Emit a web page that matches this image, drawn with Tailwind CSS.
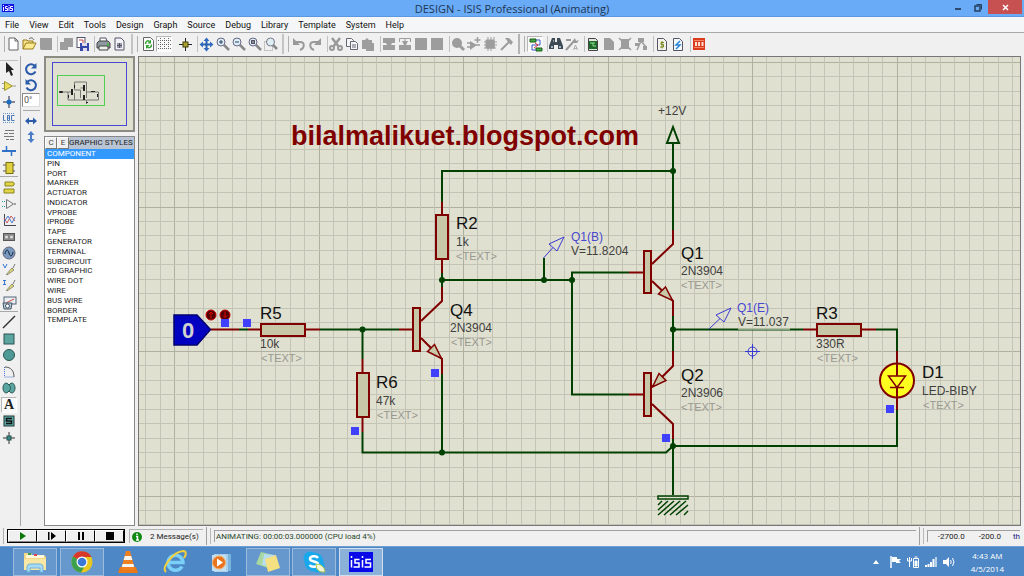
<!DOCTYPE html>
<html lang="en">
<head>
  <meta charset="UTF-8" />
  <title>DESIGN - ISIS Professional (Animating)</title>
  <script src="https://cdn.jsdelivr.net/npm/@tailwindcss/browser@4"></script>
</head>
<body class="h-screen flex flex-col overflow-hidden bg-[#f0f0f0] font-['Roboto',sans-serif] text-[8px] leading-[10px] text-[#222]">

  <!-- Title bar -->
  <header class="h-[17px] shrink-0 flex items-start bg-[#6aabf7] border-b border-[#5b98e0]">
    <div class="flex-1 pl-[2px] pt-1">
      <svg class="w-3 h-2" viewBox="0 0 24 16"><rect width="24" height="16" fill="#1010e0"/><path d="M3 2v2M3 6v8M11 5H7v4h4v4H6M14 2v2M14 6v8M22 5h-5v4h4v4h-5" fill="none" stroke="#fff" stroke-width="2"/></svg>
    </div>
    <h1 class="font-['Open_Sans',sans-serif] text-[11px] leading-[17px] text-[#1d3550]">DESIGN - ISIS Professional (Animating)</h1>
    <div class="flex-1 flex justify-end pr-[2px]">
      <button aria-label="Minimize" class="w-5 h-[14px] flex items-end justify-center pb-1"><span class="w-[6px] h-[2px] bg-[#2c4a6b]"></span></button>
      <button aria-label="Restore" class="w-5 h-[14px] flex items-center justify-center"><svg class="w-[9px] h-[9px]" viewBox="0 0 9 9" fill="none" stroke="#243f5e"><path d="M2.500 1.500h5v5"/><rect x="1" y="3" width="5" height="5" stroke-width="1.500"/></svg></button>
      <button aria-label="Close" class="w-[34px] h-[14px] flex items-center justify-center bg-[#c75050]"><svg class="w-[7px] h-[7px]" viewBox="0 0 7 7"><path d="M1 1l5 5M6 1l-5 5" stroke="#fff" stroke-width="1.500"/></svg></button>
    </div>
  </header>

  <!-- Menu bar -->
  <nav class="h-4 shrink-0 flex items-center gap-[10px] pl-[5px] bg-[#f5f6f7] border-b border-[#a8a8a8] text-[9px] text-[#111]">
    <a href="#">File</a>
    <a href="#">View</a>
    <a href="#">Edit</a>
    <a href="#">Tools</a>
    <a href="#">Design</a>
    <a href="#">Graph</a>
    <a href="#">Source</a>
    <a href="#">Debug</a>
    <a href="#">Library</a>
    <a href="#">Template</a>
    <a href="#">System</a>
    <a href="#">Help</a>
  </nav>

  <!-- Toolbar -->
  <div class="h-[23px] shrink-0 flex items-center pl-[2px] pb-[2px] [&>button]:w-4 [&>button]:h-4 [&>button]:shrink-0 [&_svg]:w-4 [&_svg]:h-4">
    <span class="w-[3px] h-4 shrink-0 border-r border-[#b0b0b0]"></span>
    <button aria-label="New"><svg viewBox="0 0 16 16"><path d="M4 2h6l3 3v9H4z" fill="#fff" stroke="#666"/><path d="M10 2v3h3" fill="none" stroke="#666"/></svg></button>
    <button aria-label="Open"><svg viewBox="0 0 16 16"><path d="M2 13V4h4l1 1h5v3" fill="#f5e28a" stroke="#9a7b1c"/><path d="M2 13l3-6h10l-3 6z" fill="#fbeb90" stroke="#9a7b1c"/><path d="M8 3c2-2 4-1 5 1" fill="none" stroke="#555"/></svg></button>
    <button aria-label="Save"><svg viewBox="0 0 16 16"><path d="M3 2h12v12H4l-1-1z" fill="#9d9d9d"/></svg></button>
    <span class="w-[5px] h-4 shrink-0 border-r border-[#c0c0c0]"></span>
    <button aria-label="Import section"><svg viewBox="0 0 16 16"><path d="M2 6h4V2h9v9h-5v3H2z" fill="#9d9d9d"/></svg></button>
    <button aria-label="Export section"><svg viewBox="0 0 16 16"><rect x="3" y="1.500" width="8" height="10" fill="#fff" stroke="#556"/><path d="M5 4h4v5" stroke="#c44" fill="none"/><path d="M6 7h9v8H6z" fill="#3848a8"/><path d="M8 7h5v3H8zM9 12h4v3H9z" fill="#dde"/></svg></button>
    <span class="w-[5px] h-4 shrink-0 border-r border-[#c0c0c0]"></span>
    <button aria-label="Print"><svg viewBox="0 0 16 16"><path d="M5 6V2h6l1 4" fill="#fff" stroke="#556"/><path d="M2 7l2-2h9l2 2v5H2z" fill="#8f9aa0" stroke="#444"/><path d="M4 10h9v4H4z" fill="#e8f0e8" stroke="#444"/><circle cx="13" cy="8.500" r="1" fill="#2c2"/></svg></button>
    <button aria-label="Mark output area"><svg viewBox="0 0 16 16"><path d="M4 2h6l3 3v9H4z" fill="#f2f2f8" stroke="#556"/><path d="M6 7h5v5H6z" fill="#99a"/><path d="M6 9.500h5M8.500 7v5" stroke="#556"/></svg></button>
    <span class="w-[5px] h-5 ml-px shrink-0 border-r-2 border-[#c4c4c4]"></span>
    <span class="w-[5px] h-4 mr-[2px] shrink-0 border-r border-[#b0b0b0]"></span>
    <button aria-label="Redraw"><svg viewBox="0 0 16 16"><path d="M3.500 1.500h7l3 3v10h-10z" fill="#fff" stroke="#666"/><path d="M5.500 8c0-3 2.500-4 4-2.500M11.500 8.500c0 3-2.500 4-4 2.500" fill="none" stroke="#35a035" stroke-width="1.500"/><path d="M11 3.500V7.500H7.500zM6 13V9h3.500z" fill="#35a035"/></svg></button>
    <button aria-label="Toggle grid" class="bg-[#fafafa] border border-[#b8b8b8] border-r-white border-b-white"><svg viewBox="1 1 16 16"><path d="M4.500 2v12M8.500 2v12M12.500 2v12M2 4.500h13M2 8.500h13M2 12.500h13" stroke="#666" stroke-dasharray="1 1"/></svg></button>
    <span class="w-[5px] h-4 shrink-0"></span>
    <button aria-label="Toggle origin"><svg viewBox="0 0 16 16"><path d="M8.500 2v13M2 8.500h13" stroke="#222"/><rect x="6" y="6" width="5" height="5" fill="#a8a030" stroke="#444008"/></svg></button>
    <span class="w-[5px] h-4 shrink-0 border-r border-[#c0c0c0]"></span>
    <button aria-label="Pan"><svg viewBox="0 0 16 16"><path d="M8.500 3v11M3 8.500h11" stroke="#2660b0" stroke-width="2"/><path d="M8.500 1.500l3 3.500h-6zM8.500 15.500l3-3.500h-6zM1.500 8.500l3.500-3v6zM15.500 8.500l-3.500-3v6z" fill="#2f6cc0"/></svg></button>
    <button aria-label="Zoom in"><svg viewBox="0 0 16 16"><path d="M10 9l5 5" stroke="#888" stroke-width="2.500"/><circle cx="7" cy="6" r="4" fill="#dfeef2" stroke="#668"/><path d="M5 6h4M7 4v4" stroke="#246"/></svg></button>
    <button aria-label="Zoom out"><svg viewBox="0 0 16 16"><path d="M10 9l5 5" stroke="#888" stroke-width="2.500"/><circle cx="7" cy="6" r="4" fill="#dfeef2" stroke="#668"/><path d="M5 6h4" stroke="#246"/></svg></button>
    <button aria-label="Zoom all"><svg viewBox="0 0 16 16"><path d="M10 9l5 5" stroke="#888" stroke-width="2.500"/><circle cx="7" cy="6" r="4" fill="#dfeef2" stroke="#668"/><rect x="5.500" y="4.500" width="3" height="3" fill="#889" stroke="#556"/></svg></button>
    <button aria-label="Zoom area"><svg viewBox="0 0 16 16"><rect x="2.500" y="5.500" width="8" height="9" fill="none" stroke="#999" stroke-dasharray="1 1"/><path d="M11 9l4 4" stroke="#888" stroke-width="2.500"/><circle cx="8.500" cy="6" r="4" fill="#dfeef2" stroke="#778"/></svg></button>
    <span class="w-[5px] h-5 ml-px shrink-0 border-r-2 border-[#c4c4c4]"></span>
    <span class="w-[5px] h-4 mr-[2px] shrink-0 border-r border-[#b0b0b0]"></span>
    <button aria-label="Undo"><svg viewBox="0 0 16 16"><path d="M4 6h5c5 0 5 6 0 8" fill="none" stroke="#999" stroke-width="2"/><path d="M2 2v7h7z" fill="#999"/></svg></button>
    <button aria-label="Redo"><svg viewBox="0 0 16 16"><path d="M12 6H7c-5 0-5 6 0 8" fill="none" stroke="#999" stroke-width="2"/><path d="M14 2v7H7z" fill="#999"/></svg></button>
    <span class="w-[5px] h-4 shrink-0 border-r border-[#c0c0c0]"></span>
    <button aria-label="Cut"><svg viewBox="0 0 16 16"><path d="M4 2l7 9M12 2l-7 9" stroke="#999" stroke-width="2.500"/><circle cx="4" cy="12" r="2" fill="none" stroke="#999" stroke-width="2"/><circle cx="12" cy="12" r="2" fill="none" stroke="#999" stroke-width="2"/></svg></button>
    <button aria-label="Copy"><svg viewBox="0 0 16 16"><path d="M2.500 2.500h5l2 2v6h-7z" fill="#f4f6f8" stroke="#667"/><path d="M6.500 5.500h5l2 2v6h-7z" fill="#f4f6f8" stroke="#667"/><path d="M8 9h4M8 11h4" stroke="#667"/></svg></button>
    <button aria-label="Paste"><svg viewBox="0 0 16 16"><path d="M2 4h3l2-2 2 2h3v3h2v8H6v-2H2z" fill="#9d9d9d"/></svg></button>
    <span class="w-[5px] h-4 shrink-0 border-r border-[#c0c0c0]"></span>
    <button aria-label="Block copy"><svg viewBox="0 0 16 16"><path d="M2 2h12v5h-3l-1 2h4v5H2V9h4L5 7H2z" fill="#9d9d9d"/></svg></button>
    <button aria-label="Block move"><svg viewBox="0 0 16 16"><path d="M2.500 6V2.500h11V6M8 3v6" fill="none" stroke="#9d9d9d"/><path d="M5 5h6L9 9h5v5H2V9h5z" fill="#9d9d9d"/></svg></button>
    <button aria-label="Block rotate"><svg viewBox="0 0 16 16"><path d="M2 2h12v12H2z" fill="#9d9d9d"/></svg></button>
    <button aria-label="Block delete"><svg viewBox="0 0 16 16"><path d="M2 2h12v12H2z" fill="#9d9d9d"/></svg></button>
    <span class="w-[5px] h-4 shrink-0 border-r border-[#c0c0c0]"></span>
    <button aria-label="Pick parts"><svg viewBox="0 0 16 16"><circle cx="7" cy="7" r="5" fill="#9d9d9d"/><path d="M9 9l5 5" stroke="#9d9d9d" stroke-width="3"/></svg></button>
    <button aria-label="Make device"><svg viewBox="0 0 16 16"><path d="M4 5l7 4-7 5z" fill="#9d9d9d"/><path d="M1 7h4M1 11h4M10 9h4M11.500 1v6M8.500 4h6" stroke="#9d9d9d" stroke-width="1.500"/></svg></button>
    <button aria-label="Packaging tool"><svg viewBox="0 0 16 16"><path d="M4 4h8v8H4z" fill="#9d9d9d" stroke="#9d9d9d"/><path d="M6 1v14M9 1v14M12 1v12M2 6h13M2 9h13M2 12h12" stroke="#9d9d9d"/></svg></button>
    <button aria-label="Decompose"><svg viewBox="0 0 16 16"><path d="M3 14l8-8" stroke="#9d9d9d" stroke-width="2"/><path d="M7 2h4l4 4-2 3-3-3z" fill="#9d9d9d"/></svg></button>
    <span class="w-[5px] h-5 ml-px shrink-0 border-r-2 border-[#b4b4b4]"></span>
    <span class="w-[5px] h-4 mr-[2px] shrink-0 border-r border-[#b0b0b0]"></span>
    <button aria-label="Wire autorouter" class="bg-[#fafafa] border border-[#b8b8b8] border-r-white border-b-white"><svg viewBox="1 1 16 16"><path d="M3 3h6v3H3zM9 12h6v3H9z" fill="#3fae3f" stroke="#185818"/><path d="M9 4h4v5H5v5h4" fill="none" stroke="#3858c8"/><path d="M8 7l3 2-4 3" fill="none" stroke="#d33"/></svg></button>
    <span class="w-[5px] h-4 shrink-0 border-r border-[#c0c0c0]"></span>
    <button aria-label="Search and tag"><svg viewBox="0 0 16 16"><path d="M4 2h3v4h2V2h3l3 8v3h-5V9H6v4H1v-3z" fill="#3d4a55"/><path d="M3 10h2v2H3zM11 10h2v2h-2zM5 4h1v3" fill="#a9b8c0"/></svg></button>
    <button aria-label="Property assignment"><svg viewBox="0 0 16 16"><path d="M2 14l9-10M2 4h5" stroke="#999" stroke-width="2"/><path d="M9 5l2-3 1 3 3-1-2 3-3 0z" fill="#999"/><path d="M9.500 14l2-5 2 5M10 12.500h3" fill="none" stroke="#aaa"/></svg></button>
    <span class="w-[5px] h-4 shrink-0 border-r border-[#c0c0c0]"></span>
    <button aria-label="Design explorer"><svg viewBox="0 0 16 16"><path d="M3.500 2.500h7l2 2v10h-9z" fill="#dfe8df" stroke="#444"/><rect x="4" y="5" width="8" height="8" fill="#1d6b2a"/><path d="M5 7h3v3h3M9 6v2" stroke="#8fe08f" fill="none"/></svg></button>
    <button aria-label="New sheet"><svg viewBox="0 0 16 16"><path d="M3 2h6l4 4v8H3z" fill="#9d9d9d"/></svg></button>
    <button aria-label="Remove sheet"><svg viewBox="0 0 16 16"><path d="M4 3h8v10H4z" fill="#9d9d9d"/><path d="M2 2l12 12M14 2L2 14" stroke="#9d9d9d" stroke-width="1.500"/></svg></button>
    <button aria-label="Exit to parent"><svg viewBox="0 0 16 16"><path d="M5 2h6v4H5zM2 7h4v3H2zM10 10h4v4h-4z" fill="#9d9d9d"/><path d="M4 14l4-9 5 6" fill="none" stroke="#9d9d9d" stroke-width="1.500"/></svg></button>
    <span class="w-[5px] h-4 shrink-0 border-r border-[#c0c0c0]"></span>
    <button aria-label="Bill of materials"><svg viewBox="0 0 16 16"><path d="M3.500 2.500h6l3 3v9h-9z" fill="#f3f3ea" stroke="#556"/><path d="M10 6.500H7v2h2.500v2.500H6M8 5v7.500" fill="none" stroke="#7a8a20"/></svg></button>
    <button aria-label="Electrical rules check"><svg viewBox="0 0 16 16"><path d="M3.500 2.500h6l3 3v9h-9z" fill="#f3f8fb" stroke="#556"/><path d="M10 5L6 9h4l-4 4" fill="none" stroke="#2a86d8" stroke-width="1.500"/></svg></button>
    <span class="w-[5px] h-4 shrink-0 border-r border-[#c0c0c0]"></span>
    <button aria-label="Netlist to ARES"><svg viewBox="0 0 16 16"><rect x="2" y="2" width="12" height="12" fill="#dc3a1c"/><path d="M3 4.500h10M3 11.500h10" stroke="#f08868"/><path d="M4 6h2v4H4zM7 6h2v4H7zM10.500 6h2v4h-2z" fill="#ffe0d0"/></svg></button>
  </div>

  <!-- Work area -->
  <div class="flex-1 min-h-0 flex">

    <!-- Mode selector -->
    <div class="w-[21px] shrink-0 border-r border-[#a8a8a8] pt-[4px] pr-[2px] [&_svg]:w-4 [&_svg]:h-4 [&_button]:h-4 [&_button]:shrink-0">
      <div class="h-[117px] flex flex-col items-center justify-around border-t border-b border-t-[#c0c0c0] border-b-[#a8a8a8]">
        <button aria-label="Selection"><svg viewBox="0 0 16 16"><path d="M5 1v11l3-2 2 5 2-1-2-5h3z" fill="#222"/></svg></button>
        <button aria-label="Component"><svg viewBox="0 0 16 16"><path d="M1 5.500h3M1 10.500h3M12 8h3" stroke="#999"/><path d="M3.500 3.500l8 4.500-8 4.500z" fill="#e8dc58" stroke="#a09830"/></svg></button>
        <button aria-label="Junction dot"><svg viewBox="0 0 16 16"><path d="M8 2v12M2 8h12" stroke="#224"/><circle cx="8" cy="8" r="2.500" fill="#1e6cc0"/></svg></button>
        <button aria-label="Wire label"><svg viewBox="0 0 16 16"><path d="M2 3.500h12M2 12.500h12" stroke="#6a94c8" stroke-dasharray="1 1"/><path d="M2.500 5v5.500h2M6.500 5.500v5h2v-5zM6.500 8h2M13.500 5.500h-3v5h3" fill="none" stroke="#4878b8"/></svg></button>
        <button aria-label="Text script"><svg viewBox="0 0 16 16"><path d="M4 3.500h9M3 6.500h4M8 6.500h5M3 9.500h10M5 12.500h3M9 12.500h4" stroke="#777"/></svg></button>
        <button aria-label="Bus"><svg viewBox="0 0 16 16"><path d="M1 8h14" stroke="#2f70c8" stroke-width="2"/><path d="M5.500 3v6M10.500 7v6" stroke="#2f70c8" stroke-width="1.500"/></svg></button>
        <button aria-label="Subcircuit"><svg viewBox="0 0 16 16"><path d="M2 5h12M2 11h12" stroke="#555"/><rect x="5" y="2.500" width="7" height="11" fill="#e0d040" stroke="#766c10"/></svg></button>
      </div>
      <div class="h-[135px] flex flex-col items-center justify-around border-b border-[#a8a8a8] pt-[2px]">
        <button aria-label="Terminals"><svg viewBox="0 0 16 16"><path d="M4 3h8l1.500 2L12 7H4zM3 10h10v4H3z" fill="#e0d648" stroke="#8a8220"/></svg></button>
        <button aria-label="Device pins"><svg viewBox="0 0 16 16"><path d="M1 5.500h4M1 10.500h4" stroke="#29a0a0" stroke-dasharray="1 1"/><path d="M5.500 3.500l7 4.500-7 4.500z" fill="none" stroke="#777"/><path d="M13 8h2" stroke="#555"/></svg></button>
        <button aria-label="Graph"><svg viewBox="0 0 16 16"><path d="M3.500 2v11.500H15" stroke="#445" fill="none"/><path d="M3 6l3 5 4-7 4 5" fill="none" stroke="#c55"/><path d="M3 10l4-6 4 7 3-6" fill="none" stroke="#4a78c8"/></svg></button>
        <button aria-label="Tape recorder"><svg viewBox="0 0 16 16"><rect x="2.500" y="4.500" width="11" height="7" fill="#888" stroke="#555"/><circle cx="5.500" cy="8" r="1.500" fill="#ddd"/><circle cx="10.500" cy="8" r="1.500" fill="#ddd"/></svg></button>
        <button aria-label="Generator"><svg viewBox="0 0 16 16"><circle cx="8" cy="8" r="6" fill="#7898c0" stroke="#667"/><path d="M4 9c1-5 3-5 4-1s3 4 4-1" fill="none" stroke="#123"/></svg></button>
        <button aria-label="Voltage probe"><svg viewBox="0 0 16 16"><path d="M2 2l2 4 2-4" fill="none" stroke="#3a78d0"/><path d="M5 13l6-7 2 2-7 5" fill="#e8e070" stroke="#887"/><path d="M12 6l2-4" stroke="#777"/></svg></button>
        <button aria-label="Current probe"><svg viewBox="0 0 16 16"><path d="M2 2.500h3M3.500 2.500v4M2 6.500h3" fill="none" stroke="#3a78d0"/><path d="M5 13l6-7 2 2-7 5" fill="#e8e070" stroke="#887"/><path d="M12 6l2-4" stroke="#777"/></svg></button>
        <button aria-label="Instruments"><svg viewBox="0 0 16 16"><rect x="3" y="2" width="12" height="7" fill="#e8eef2" stroke="#567"/><path d="M5 8l8-4" stroke="#c44"/><path d="M2 8h9l-1 6H3z" fill="#b8ccd8" stroke="#456"/><circle cx="6.500" cy="11" r="2" fill="#fff" stroke="#456"/></svg></button>
      </div>
      <div class="h-[134px] flex flex-col items-center justify-around pt-[2px]">
        <button aria-label="Line"><svg viewBox="0 0 16 16"><path d="M2 14L14 2" stroke="#333" stroke-width="1.500"/></svg></button>
        <button aria-label="Box"><svg viewBox="0 0 16 16"><rect x="3" y="3" width="10" height="10" fill="#5aa5a0" stroke="#2b5550"/></svg></button>
        <button aria-label="Circle"><svg viewBox="0 0 16 16"><circle cx="8" cy="8" r="5.500" fill="#4f9a96" stroke="#2b5550"/></svg></button>
        <button aria-label="Arc"><svg viewBox="0 0 16 16"><path d="M3.500 3v10h10" fill="none" stroke="#4870d0" stroke-dasharray="1 1"/><path d="M4 3c6 0 9 4 9 10" fill="none" stroke="#555"/></svg></button>
        <button aria-label="Closed path"><svg viewBox="0 0 16 16"><path d="M8 5C5 1 2 4 2 8s3 7 6 3c3 4 6 1 6-3s-3-7-6-3z" fill="#5aa5a0" stroke="#2b5550"/><path d="M8 5c2 2 2 4 0 6" fill="none" stroke="#2b5550"/></svg></button>
        <button aria-label="Text" class="w-4 bg-[#fafafa] border border-[#b8b8b8] border-r-white border-b-white font-['Liberation_Serif',serif] font-bold text-[14px] leading-[14px] text-[#222]">A</button>
        <button aria-label="Symbol"><svg viewBox="0 0 16 16"><rect x="3" y="3" width="10" height="10" fill="#5aa5a0" stroke="#1d3a38"/><path d="M11 5.500H5.500v2.500h5v2.500H5" fill="none" stroke="#111" stroke-width="1.500"/></svg></button>
        <button aria-label="Marker"><svg viewBox="0 0 16 16"><path d="M8 2v12M2 8h12" stroke="#333"/><rect x="6" y="6" width="4" height="4" fill="#3a8c88" stroke="#24504e"/></svg></button>
      </div>
    </div>

    <!-- Rotation -->
    <div class="w-[23px] shrink-0 flex flex-col items-center pt-[5px] pl-px pr-1 [&_svg]:w-4 [&_svg]:h-4">
      <button aria-label="Rotate clockwise"><svg viewBox="0 0 16 16"><path d="M11.500 4.500a5 5 0 1 0 1 6" fill="none" stroke="#2a5caa" stroke-width="2"/><path d="M13.500 2v5.500H8z" fill="#2a5caa"/></svg></button>
      <button aria-label="Rotate anticlockwise"><svg viewBox="0 0 16 16"><path d="M4.500 4.500a5 5 0 1 1-1 6" fill="none" stroke="#2a5caa" stroke-width="2"/><path d="M2.500 2v5.500H8z" fill="#2a5caa"/></svg></button>
      <input type="text" value="0°" aria-label="Rotation angle" class="w-[18px] h-[14px] bg-white border border-[#8a8a8a] border-r-[#ddd] border-b-[#ddd] pl-px text-[9px] text-[#555]" />
      <span class="w-[17px] h-px mt-[3px] mb-[2px] bg-[#a8a8a8]"></span>
      <button aria-label="Flip horizontal"><svg viewBox="0 0 16 16"><path d="M4 8h8" stroke="#2a5caa" stroke-width="2"/><path d="M2 8l4-3.500v7zM14 8l-4-3.500v7z" fill="#2a5caa"/></svg></button>
      <button aria-label="Flip vertical"><svg viewBox="0 0 16 16"><path d="M8 4v8" stroke="#4a7cc8" stroke-width="2"/><path d="M8 2L4.500 6h7zM8 14l-3.500-4h7z" fill="#4a7cc8"/></svg></button>
    </div>

    <!-- Overview and object selector -->
    <div class="w-[91px] shrink-0 flex flex-col gap-1">
      <div class="h-[76px] shrink-0 border-2 border-[#8c8c84] bg-[#e0e0d0] px-[6px] py-1">
        <div class="h-full border border-[#4848d0] px-[5px] py-[13px]">
          <svg class="w-[46px] h-[29px] outline outline-[#50d050]" viewBox="0 0 46 29" fill="none" stroke="#777">
            <path d="M16.500 14v-8h12v16M16.500 14h6v8M22.500 12h4M28.500 16h12v8h-12v4M10 16v8h18M2 16h11M16.500 17v7"/>
            <path d="M14 13v6M26 9v6M26 19v5" stroke="#222" stroke-width="2"/>
            <path d="M1.500 15.500h3v1h-3zM33 15.500h4M39.500 18v3M16.500 9v3M28 26.500h2M10.500 19v3" stroke="#222"/>
          </svg>
        </div>
      </div>
      <div class="flex-1 min-h-0 flex flex-col border border-[#888] bg-white">
        <div class="h-3 shrink-0 flex items-stretch bg-[#b8c4d4] whitespace-nowrap">
          <button class="w-3 shrink-0 bg-[#f0f0f0] border border-white border-r-[#777] border-b-[#777] text-[#444]">C</button>
          <button class="w-3 shrink-0 bg-[#f0f0f0] border border-white border-r-[#777] border-b-[#777] text-[#444]">E</button>
          <h2 class="leading-3">GRAPHIC STYLES</h2>
        </div>
        <ul role="listbox" aria-label="Graphic styles" class="h-[176px] flex flex-col [&>li]:flex-1 [&>li]:pl-[2px] [&>li]:min-h-0">
          <li role="option" aria-selected="true" class="bg-[#3399ff] text-white">COMPONENT</li>
          <li role="option">PIN</li>
          <li role="option">PORT</li>
          <li role="option">MARKER</li>
          <li role="option">ACTUATOR</li>
          <li role="option">INDICATOR</li>
          <li role="option">VPROBE</li>
          <li role="option">IPROBE</li>
          <li role="option">TAPE</li>
          <li role="option">GENERATOR</li>
          <li role="option">TERMINAL</li>
          <li role="option">SUBCIRCUIT</li>
          <li role="option">2D GRAPHIC</li>
          <li role="option">WIRE DOT</li>
          <li role="option">WIRE</li>
          <li role="option">BUS WIRE</li>
          <li role="option">BORDER</li>
          <li role="option">TEMPLATE</li>
        </ul>
      </div>
    </div>

    <!-- Schematic -->
    <main class="flex-1 min-w-0 ml-[3px] mr-[3px] border border-[#777] bg-[#e0e0d0] overflow-hidden">
      <svg class="w-full h-full font-['Liberation_Sans',sans-serif]">
        <g transform="translate(-139 -57)">
          <g id="grid" shape-rendering="crispEdges"></g>

          <!-- wires -->
          <g fill="none" stroke="#004000" stroke-width="2">
            <path d="M442 202V171H673M673 230V143M442 273V287M442 280H571.500M544 280V258M572 272V395M571 272.500H629M571 394.500H629"/>
            <path d="M239 329.500H248M320 329.500H399M362.500 329V359M362.500 432V452.500H666L673 446M442 374V452"/>
            <path d="M673 315V352M673 329.500H803M876 329.500H897V352M897 410V446H673M673 438V495"/>
            <path d="M673 127L679 143H667Z"/>
            <path d="M658 496h30v3h-30z" stroke-width="1.500"/>
            <path d="M658 505l4-4M658 510l10-9M658 515l16-14M664 515l16-14M670 515l16-14M676 515l12-10M684 515l4-4" stroke-width="1.500"/>
          </g>

          <!-- component leads and bodies -->
          <g fill="none" stroke="#800000" stroke-width="2">
            <path d="M211 329.500H239M248 329.500H261M305 329.500H320M399 329.500H413M803 329.500H817M861 329.500H876M362.500 359V373M362.500 417V432"/>
            <path d="M442 202V215M442 259V273M442 287V301L421 321M421 338L442 359V374"/>
            <path d="M629 272.500H643M629 394.500H643M673 230V244L652 264M652 281L673 301V316"/>
            <path d="M673 351V366L652 387M652 404L673 424V439"/>
            <g fill="#c8c8a8">
              <rect x="261" y="324" width="44" height="12"/>
              <rect x="817" y="324" width="44" height="12"/>
              <rect x="357" y="373" width="12" height="44"/>
              <rect x="436" y="215" width="12" height="44"/>
              <rect x="413" y="308" width="7" height="43"/>
              <rect x="644" y="251" width="7" height="42"/>
              <rect x="644" y="373" width="7" height="43"/>
              <path d="M434.500 344.500l-7 7 14 7zM665.500 287l-7 7 14 6.500zM652.500 387l6.500-13.500 7 7z" stroke-width="1.500"/>
            </g>
            <circle cx="897" cy="380.500" r="17" fill="#ffff20"/>
            <path d="M897 351V376M897 387V410"/>
            <path d="M888.500 376H905.500L897 387.500ZM890 387.500H904" stroke-width="1.500"/>
          </g>

          <!-- junction dots -->
          <g fill="#004000">
            <circle cx="362.500" cy="329.500" r="3"/><circle cx="442" cy="280" r="3"/><circle cx="544" cy="280" r="3"/>
            <circle cx="572" cy="280" r="3"/><circle cx="673" cy="171" r="3"/><circle cx="673" cy="329.500" r="3"/>
            <circle cx="673" cy="446" r="3"/><circle cx="442" cy="452.500" r="3"/>
          </g>

          <!-- logic state -->
          <path d="M174 315H197L210.500 329.500L197 345H174Z" fill="#0000c0" stroke="#000070" stroke-width="1.500"/>
          <text x="188" y="338" text-anchor="middle" font-size="22" font-weight="bold" fill="#d0d0d0">0</text>
          <circle cx="211" cy="315" r="5" fill="#500000" stroke="#c80000"/>
          <circle cx="225" cy="315" r="5" fill="#500000" stroke="#c80000"/>
          <path d="M211 318.500v-6M209 314l2-2 2 2M225 311.500v6M223 315.500l2 2 2-2" fill="none" stroke="#e00000"/>

          <!-- pin state markers -->
          <g fill="#4040ff">
            <rect x="221" y="319" width="8" height="8"/><rect x="243" y="319" width="8" height="8"/>
            <rect x="351" y="427" width="8" height="8"/><rect x="431" y="369" width="8" height="8"/>
            <rect x="662" y="434" width="8" height="8"/><rect x="886" y="405" width="8" height="8"/>
          </g>

          <!-- probes and origin -->
          <g fill="none" stroke="#3838d0">
            <path d="M543.500 258L553 247.500M564 237L549 244L557 251Z"/>
            <path d="M709 329L720 318.500M731 308L716 315L724 322Z"/>
            <circle cx="752.500" cy="351.500" r="4.500"/><path d="M745 351.500h15M752.500 344v15"/>
          </g>
          <g fill="#e0e0d0" opacity="0.6">
            <rect x="571" y="231" width="31" height="13"/><rect x="571" y="245" width="59" height="13"/>
            <rect x="738" y="302" width="31" height="13"/><rect x="738" y="316" width="52" height="14"/>
          </g>

          <text x="291" y="145" font-size="27" font-weight="bold" fill="#800000">bilalmalikuet.blogspot.com</text>

          <g font-size="17" fill="#111">
            <text x="456" y="229">R2</text><text x="450" y="316">Q4</text><text x="260" y="319">R5</text><text x="376" y="388">R6</text>
            <text x="681" y="259">Q1</text><text x="681" y="381">Q2</text><text x="816" y="319">R3</text><text x="922" y="378">D1</text>
          </g>
          <g font-size="12" fill="#404040">
            <text x="658" y="115">+12V</text><text x="456" y="246">1k</text><text x="450" y="332">2N3904</text><text x="260" y="348">10k</text>
            <text x="376" y="405">47k</text><text x="681" y="275">2N3904</text><text x="681" y="397">2N3906</text><text x="816" y="348">330R</text>
            <text x="922" y="395">LED-BIBY</text><text x="571" y="255">V=11.8204</text><text x="738" y="326">V=11.037</text>
          </g>
          <g font-size="12" fill="#4848d0">
            <text x="571" y="241">Q1(B)</text><text x="737" y="312">Q1(E)</text>
          </g>
          <g font-size="11" fill="#989890">
            <text x="456" y="260">&lt;TEXT&gt;</text><text x="451" y="346">&lt;TEXT&gt;</text><text x="261" y="362">&lt;TEXT&gt;</text><text x="377" y="419">&lt;TEXT&gt;</text>
            <text x="681" y="289">&lt;TEXT&gt;</text><text x="681" y="411">&lt;TEXT&gt;</text><text x="817" y="362">&lt;TEXT&gt;</text><text x="923" y="409">&lt;TEXT&gt;</text>
          </g>
        </g>
      </svg>
    </main>
  </div>

  <!-- Status bar -->
  <footer class="h-5 shrink-0 flex items-center pl-[2px] pr-1">
    <span class="w-[2px] h-4 mr-[3px] border-r border-[#b0b0b0]"></span>
    <div class="w-[118px] h-[14px] shrink-0 flex border border-black [&>button]:flex-1 [&>button]:flex [&>button]:items-center [&>button]:justify-center [&>button]:border [&>button]:border-white [&>button]:border-r-black [&>button]:border-b-[#888] [&_svg]:w-2 [&_svg]:h-2">
      <button aria-label="Play"><svg viewBox="0 0 8 8"><path d="M1 0l6 4-6 4z" fill="#087808"/></svg></button>
      <button aria-label="Step"><svg viewBox="0 0 8 8"><path d="M0 0h1.500v8H0zM3 0l5 4-5 4z"/></svg></button>
      <button aria-label="Pause"><svg viewBox="0 0 8 8"><path d="M1 0h2v8H1zM5 0h2v8H5z"/></svg></button>
      <button aria-label="Stop"><svg viewBox="0 0 8 8"><path d="M0 0h8v8H0z"/></svg></button>
    </div>
    <div class="w-[74px] h-[14px] ml-1 shrink-0 flex items-center gap-2 pl-[2px] border-t border-l border-[#b0b0b0]">
      <svg class="w-[10px] h-[10px]" viewBox="0 0 10 10"><circle cx="5" cy="5" r="5" fill="#108a10"/><path d="M4 4.500h1.500V8M4 8h3M5 1.500v1.500" stroke="#fff" stroke-width="1.500" fill="none"/></svg>
      <span>2 Message(s)</span>
    </div>
    <span class="w-1 h-[18px] border-r border-[#a0a0a0]"></span>
    <span class="w-1 h-4 mr-[3px] border-r border-[#b8b8b8]"></span>
    <div class="flex-1 h-3 pl-px border-t border-l border-[#a0a0a0] leading-[12px] text-[#284828]">ANIMATING: 00:00:03.000000 (CPU load 4%)</div>
    <span class="w-1 h-[18px] border-r border-[#a0a0a0]"></span>
    <span class="w-1 h-4 mr-[3px] border-r border-[#b8b8b8]"></span>
    <div class="w-[93px] h-3 shrink-0 flex justify-end border-t border-l border-[#a0a0a0] leading-[12px]">
      <span class="mr-[14px]">-2700.0</span>
      <span class="mr-3">-200.0</span>
      <span class="text-[#202080]">th</span>
    </div>
  </footer>

  <!-- Taskbar -->
  <div class="h-[30px] shrink-0 flex items-center bg-[#4d87c5] border-t border-[#6d9fd2] pl-[13px] pr-5">
    <div class="w-[372px] grid grid-cols-8 [&>button]:w-11 [&>button]:h-7 [&>button]:flex [&>button]:items-center [&>button]:justify-center [&_svg]:w-6 [&_svg]:h-6">
      <button aria-label="File Explorer" class="bg-white/15 border border-white/35"><svg viewBox="0 0 24 24"><path d="M1 3h7l1 2h12l2 2v13H1z" fill="#f3d884"/><path d="M3 5h18v3H3z" fill="#fff8dc"/><path d="M5 3h3v2H5z" fill="#3a9a4a"/><path d="M11 4h3v2h-3z" fill="#d44"/><path d="M1 9h22v11H1z" fill="#f8e6a4"/><path d="M4 22v-5q0-3 3-3h10q3 0 3 3v5h-3v-4H7v4z" fill="#a8daf4" stroke="#6cb4dc"/></svg></button>
      <button aria-label="Chrome" class="bg-white/15 border border-white/35"><svg viewBox="0 0 24 24"><circle cx="12" cy="12" r="10.500" fill="#e8c820"/><path d="M12 12L3 6.500A10.500 10.500 0 0 1 21.500 7H12z" fill="#d8382c"/><path d="M12 12L3 6.500A10.500 10.500 0 0 0 11 22.500l4-7z" fill="#3ca04c"/><circle cx="12" cy="12" r="5.500" fill="#fff"/><circle cx="12" cy="12" r="4.300" fill="#3a78d8"/></svg></button>
      <button aria-label="VLC"><svg viewBox="0 0 24 24"><path d="M4 17h16l2 6H2z" fill="#e87818"/><path d="M10 1h4l5 18q-7 3-14 0z" fill="#f08020"/><path d="M8.800 6h6.400l1.200 4H7.600zM6.600 14h10.800l.8 3H5.800z" fill="#f4f4f0"/></svg></button>
      <button aria-label="Internet Explorer"><svg viewBox="0 0 24 24"><path d="M19 16.500a7.500 7.500 0 1 1 1-4H6" fill="none" stroke="#7ad0f8" stroke-width="3.500"/><path d="M3 22C-2 18 10 2 20 1c4 0 3 4 1 7" fill="none" stroke="#f2cf3c" stroke-width="2"/></svg></button>
      <button aria-label="Media Player"><svg viewBox="0 0 24 24"><path d="M8 4h14v17H8z" fill="#78b4dc"/><path d="M5 4h14v18H5z" fill="#a8d0ea"/><path d="M3 5h14v16H3z" fill="#c4e0f0"/><circle cx="10" cy="12.500" r="6.500" fill="#e87420" stroke="#f4b070"/><path d="M8 8.500l6 4-6 4z" fill="#fff"/></svg></button>
      <button aria-label="Sticky Notes" class="bg-white/15 border border-white/35"><svg viewBox="0 0 24 24"><path d="M5 2l12 3-5 13L0 14z" fill="#a8d8a0"/><path d="M8 4l11 1-1 12-12-2z" fill="#b8dcf0"/><path d="M9 9l11-4 4 13-12 4z" fill="#f4e080"/></svg></button>
      <button aria-label="Skype" class="bg-white/15 border border-white/35"><svg viewBox="0 0 24 24"><circle cx="8" cy="8" r="6.500" fill="#18a8ec"/><circle cx="16" cy="16" r="6.500" fill="#18a8ec"/><circle cx="12" cy="12" r="9.500" fill="#18a8ec"/><path d="M16 8c-2-3-8-2-8 1s8 2 8 5-6 4-8.500 1" fill="none" stroke="#fff" stroke-width="2.500"/><path d="M14 14q8 0 9 8-9 1-9-8z" fill="#f4f8d8" stroke="#a8c850"/></svg></button>
      <button aria-label="ISIS" class="bg-white/35 border border-white/60"><svg viewBox="0 0 24 20"><rect width="24" height="20" fill="#0808e8"/><path d="M2.500 4v2M2.500 8v7.500M10.500 7.500H6V11h4v4H4.500M13.500 4v2M13.500 8v7.500M22 7.500h-5V11h4.500v4H15.500" fill="none" stroke="#fff" stroke-width="1.500"/></svg></button>
    </div>
    <div class="flex-1"></div>
    <div class="flex items-center gap-[6px] mr-4">
      <svg class="w-[6px] h-1 mr-1" viewBox="0 0 6 4"><path d="M0 4l3-4 3 4z" fill="#fff"/></svg>
      <svg class="w-3 h-3" viewBox="0 0 12 12"><path d="M2 0v12" stroke="#fff" stroke-width="1.500"/><path d="M3 1h5v2h4l-2 2 2 2H7V6H3z" fill="#fff"/></svg>
      <svg class="w-3 h-3" viewBox="0 0 12 12" fill="none" stroke="#fff"><path d="M2.500 1v10M.5 2v3h4V2M6.500 2.500h5v9h-5zM7.500 1h3"/><path d="M8 5h2v5H8z" fill="#fff"/></svg>
      <svg class="w-3 h-3" viewBox="0 0 12 12" fill="#fff"><path d="M0 9h2v2H0zM2.500 8h2v3h-2zM5 6h2v5H5zM7.500 3h2v8h-2z"/><path d="M10 1h2v10h-2z" opacity=".6"/></svg>
      <svg class="w-3 h-3" viewBox="0 0 12 12"><path d="M0 4h3l3-3v10L3 8H0z" fill="#fff"/><path d="M7.500 4q1.500 2 0 4M9.500 2q3 4 0 8" fill="none" stroke="#fff"/></svg>
    </div>
    <div class="font-['Open_Sans',sans-serif] text-[8px] leading-[13px] text-white text-center">
      <div>4:43 AM</div>
      <div>4/5/2014</div>
    </div>
  </div>

  <script>
    // Schematic grid: every tenth line is a heavier one
    const grid = document.getElementById('grid');
    const STEP = 14.45;

    function addLine(x, y, w, h, major) {
      const r = document.createElementNS('http://www.w3.org/2000/svg', 'rect');
      r.setAttribute('x', x);
      r.setAttribute('y', y);
      r.setAttribute('width', w);
      r.setAttribute('height', h);
      r.setAttribute('fill', major ? '#b0b0a0' : '#c4c4b6');
      grid.appendChild(r);
    }

    for (let i = -10; i < 130; i++) {
      addLine(Math.round(174 + i * STEP), 0, 1, 2000, i % 10 === 0);
      addLine(0, Math.round(62 + i * STEP), 2200, 1, i % 10 === 0);
    }
  </script>
</body>
</html>
